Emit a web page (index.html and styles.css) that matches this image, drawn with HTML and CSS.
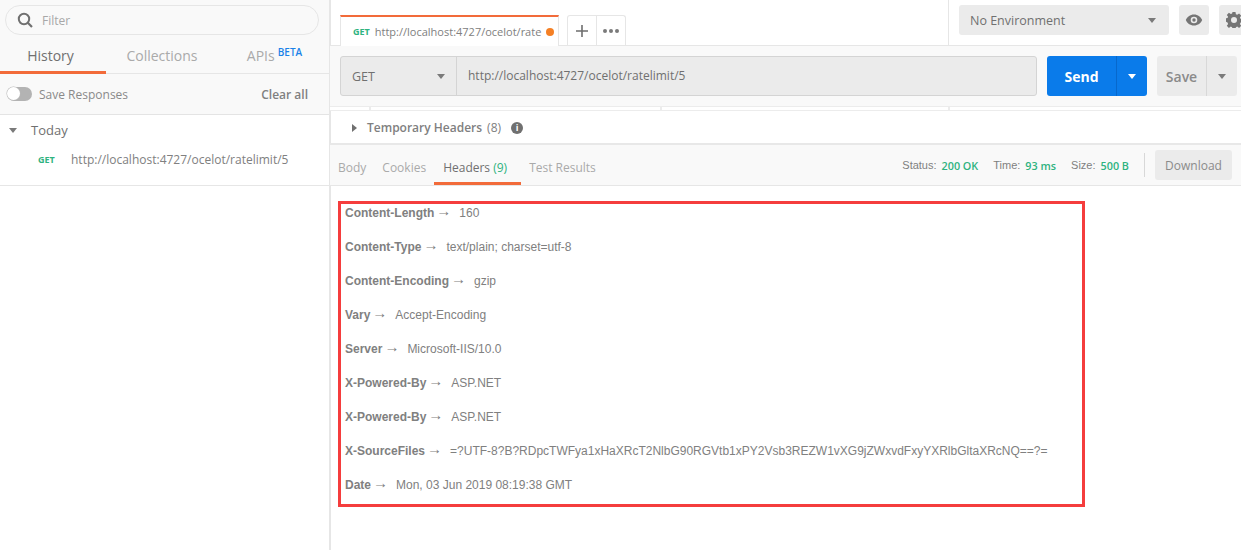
FILE: index.html
```html
<!DOCTYPE html>
<html lang="en">
<head>
<meta charset="utf-8">
<title>Postman</title>
<link rel="stylesheet" href="styles.css">
</head>
<body>
<div class="app">
  <aside class="sidebar">
    <div class="side-top">
      <div class="filter">
        <svg class="search" width="16" height="16" viewBox="0 0 16 16"><circle cx="7" cy="7" r="5.2" fill="none" stroke="#707070" stroke-width="2"/><path d="M10.8 10.8 15 15" stroke="#707070" stroke-width="2.2"/></svg>
        <span>Filter</span>
      </div>
      <div class="side-tabs">
        <div class="side-tab active">History</div>
        <div class="side-tab">Collections</div>
        <div class="side-tab apis">APIs<sup>BETA</sup></div>
      </div>
      <div class="save-row">
        <span class="toggle"><i></i></span>
        <span class="save-label">Save Responses</span>
        <span class="clear">Clear all</span>
      </div>
    </div>
    <div class="history">
      <div class="today"><i class="caret"></i><span>Today</span></div>
      <div class="hist-item"><b>GET</b><span>http://localhost:4727/ocelot/ratelimit/5</span></div>
    </div>
  </aside>
  <main class="main">
    <header class="topbar">
      <div class="tabs-area">
        <div class="req-tab"><b>GET</b><span>http://localhost:4727/ocelot/rate</span><i class="dot"></i></div>
        <div class="tab-actions">
          <div class="plus"><svg width="14" height="14" viewBox="0 0 14 14"><path d="M7 1v12M1 7h12" stroke="#6e6e6e" stroke-width="1.6"/></svg></div>
          <div class="more"><i></i><i></i><i></i></div>
        </div>
      </div>
      <div class="env-area">
        <div class="env"><span>No Environment</span><i class="caret"></i></div>
        <div class="icon-btn"><svg width="18" height="12" viewBox="0 0 18 12"><path fill-rule="evenodd" fill="#757575" d="M9 .5C5 .5 2 3 .8 6 2 9 5 11.500 9 11.500S16 9 17.200 6C16 3 13 .5 9 .5Zm0 2.200a3.300 3.300 0 1 1 0 6.600 3.300 3.300 0 0 1 0-6.600Z"/><circle cx="9" cy="6" r="1.700" fill="#757575"/></svg></div>
        <div class="icon-btn gear-btn"><svg width="16" height="16" viewBox="0 0 16 16"><path fill-rule="evenodd" fill="#757575" d="M6.500 0h3l.4 2.200 1.300.6 1.900-1.300 2.100 2.100-1.300 1.900.6 1.300 2.200.4v3l-2.200.4-.6 1.300 1.300 1.900-2.100 2.100-1.900-1.300-1.300.6-.4 2.200h-3l-.4-2.200-1.300-.6-1.900 1.300-2.100-2.100 1.300-1.900-.6-1.300L-.7 9.500v-3l2.200-.4.6-1.300-1.300-1.900 2.100-2.100 1.900 1.300 1.300-.6L6.500 0ZM8 5a3 3 0 1 0 0 6 3 3 0 0 0 0-6Z"/></svg></div>
      </div>
    </header>
    <section class="url-row">
      <div class="url-group">
        <div class="method"><span>GET</span><i class="caret"></i></div>
        <div class="url">http://localhost:4727/ocelot/ratelimit/5</div>
      </div>
      <div class="send"><span>Send</span><div class="split"><i class="caret"></i></div></div>
      <div class="save"><span>Save</span><div class="split"><i class="caret"></i></div></div>
    </section>
    <div class="strip"><i></i><i></i><i></i><i></i></div>
    <div class="temp">
      <i class="caret-right"></i>
      <span class="temp-label">Temporary Headers</span>
      <span class="temp-count">(8)</span>
      <span class="info">i</span>
    </div>
    <nav class="res-bar">
      <div class="res-tab">Body</div>
      <div class="res-tab">Cookies</div>
      <div class="res-tab active">Headers <em>(9)</em></div>
      <div class="res-tab">Test Results</div>
      <div class="meta">
        <span>Status:</span><strong>200 OK</strong>
        <span class="gap">Time:</span><strong>93 ms</strong>
        <span class="gap">Size:</span><strong>500 B</strong>
      </div>
      <div class="download">Download</div>
    </nav>
    <section class="headers">
      <div class="hdr"><b>Content-Length</b><u>→</u><span>160</span></div>
      <div class="hdr"><b>Content-Type</b><u>→</u><span>text/plain; charset=utf-8</span></div>
      <div class="hdr"><b>Content-Encoding</b><u>→</u><span>gzip</span></div>
      <div class="hdr"><b>Vary</b><u>→</u><span>Accept-Encoding</span></div>
      <div class="hdr"><b>Server</b><u>→</u><span>Microsoft-IIS/10.0</span></div>
      <div class="hdr"><b>X-Powered-By</b><u>→</u><span>ASP.NET</span></div>
      <div class="hdr"><b>X-Powered-By</b><u>→</u><span>ASP.NET</span></div>
      <div class="hdr"><b>X-SourceFiles</b><u>→</u><span>=?UTF-8?B?RDpcTWFya1xHaXRcT2NlbG90RGVtb1xPY2Vsb3REZW1vXG9jZWxvdFxyYXRlbGltaXRcNQ==?=</span></div>
      <div class="hdr"><b>Date</b><u>→</u><span>Mon, 03 Jun 2019 08:19:38 GMT</span></div>
    </section>
  </main>
</div>
</body>
</html>
```
FILE: styles.css
```css
* { box-sizing: border-box; }
html, body { margin: 0; height: 100%; overflow: hidden; background: #fff; }
body { font-family: "Open Sans", sans-serif; color: #808080; }
.app { display: flex; width: 1241px; height: 550px; overflow: hidden; }
i, em, u { font-style: normal; text-decoration: none; }

.caret { display: block; width: 0; height: 0; border-left: 4.500px solid transparent; border-right: 4.500px solid transparent; border-top: 5px solid #7a7a7a; }

/* sidebar */
.sidebar { width: 331px; flex: none; border-right: 2px solid #e6e6e6; display: flex; flex-direction: column; }
.side-top { background: #f9f9f9; border-bottom: 1px solid #e4e4e4; height: 115px; padding-top: 5px; }
.filter { margin-left: 5px; width: 314px; height: 30px; border: 1px solid #e6e6e6; border-radius: 15px; display: flex; align-items: center; padding-left: 11px; gap: 9px; font-size: 12px; color: #a8a8a8; }
.side-tabs { display: flex; height: 39px; border-bottom: 1px solid #e6e6e6; }
.side-tab { width: 106px; flex: none; font-size: 14px; line-height: 41px; text-align: center; color: #aaa; border-bottom: 3px solid transparent; height: 39px; }
.side-tab.active { color: #707070; border-bottom-color: #f26b3a; padding-right: 5px; }
.side-tab:nth-child(2) { width: 112px; }
.side-tab.apis { width: 110px; padding-left: 3px; }
.side-tab sup { color: #1a82e8; font-size: 10px; font-weight: 600; line-height: 0; margin-left: 3px; vertical-align: 5px; }
.save-row { display: flex; align-items: center; height: 40px; padding: 0 21px 0 7px; font-size: 12px; }
.toggle { width: 25px; height: 14px; border-radius: 7px; background: #b3b3b3; flex: none; }
.toggle i { display: block; width: 13px; height: 13px; border-radius: 50%; background: #fff; box-shadow: 0 0 0 .5px #bbb; }
.save-label { margin-left: 7px; color: #8a8a8a; }
.clear { margin-left: auto; font-weight: 600; color: #808080; }
.history { height: 71px; border-bottom: 1px solid #e6e6e6; }
.today { display: flex; align-items: center; height: 29px; font-size: 13px; color: #707070; padding: 1px 0 0 9px; }
.today .caret { margin-right: 14px; }
.hist-item { display: flex; align-items: center; height: 30px; font-size: 12px; color: #808080; padding: 0 0 0 38px; }
.hist-item b { font-size: 9px; font-weight: 700; color: #2fb380; width: 33px; flex: none; }

/* main */
.main { flex: 1; min-width: 0; display: flex; flex-direction: column; margin-left: -1px; }
.topbar { height: 46px; border-bottom: 1px solid #e6e6e6; display: flex; flex: none; }
.tabs-area { width: 619px; flex: none; display: flex; align-items: flex-end; padding-left: 10px; border-right: 1px solid #e6e6e6; }
.req-tab { width: 219px; height: 31px; border-top: 2px solid #f26b3a; border-left: 1px solid #e6e6e6; border-right: 1px solid #e6e6e6; background: #fff; display: flex; align-items: center; padding: 0 0 0 12px; margin-bottom: -1px; font-size: 11px; color: #808080; }
.req-tab b { font-size: 9px; font-weight: 700; color: #2fb380; margin-right: 5px; }
.dot { width: 8px; height: 8px; border-radius: 50%; background: #f58025; margin-left: 5px; flex: none; }
.tab-actions { display: flex; height: 30px; margin-left: 8px; border: 1px solid #e6e6e6; border-bottom: 0; border-radius: 3px 3px 0 0; }
.plus { width: 29px; border-right: 1px solid #e6e6e6; display: flex; align-items: center; justify-content: center; }
.more { width: 28px; display: flex; align-items: center; justify-content: center; gap: 2px; }
.more i { width: 4px; height: 4px; border-radius: 50%; background: #7a7a7a; }
.env-area { flex: 1; display: flex; padding: 5px 0 0 10px; gap: 10px; }
.env { width: 210px; height: 30px; background: #ebebeb; border-radius: 3px; display: flex; align-items: center; justify-content: space-between; padding: 0 13px 0 11px; font-size: 12.500px; color: #707070; }
.icon-btn { width: 30px; height: 30px; flex: none; background: #ebebeb; border-radius: 3px; display: flex; align-items: center; justify-content: center; }

.url-row { height: 60px; flex: none; background: #f9f9f9; display: flex; align-items: center; padding: 0 4px 0 10px; }
.url-group { display: flex; width: 697px; height: 40px; background: #ebebeb; border: 1px solid #d4d4d4; border-radius: 3px; flex: none; }
.method { width: 116px; flex: none; border-right: 1px solid #d4d4d4; display: flex; align-items: center; justify-content: space-between; padding: 0 11px; font-size: 12.500px; color: #707070; }
.url { flex: 1; padding-left: 11px; line-height: 38px; font-size: 12px; color: #707070; }
.send, .save { display: flex; height: 40px; border-radius: 3px; margin-left: 10px; flex: none; }
.send { width: 100px; background: #0a7bea; color: #fff; font-size: 14px; font-weight: 700; }
.send span { width: 69px; text-align: center; line-height: 41px; }
.split { flex: 1; display: flex; align-items: center; justify-content: center; border-left: 1px solid #0768cc; }
.send .caret { border-top-color: #fff; }
.save { width: 80px; background: #ebebeb; color: #8a8a8a; font-size: 14px; font-weight: 600; }
.save span { width: 49px; text-align: center; line-height: 41px; }
.save .split { border-left-color: #d8d8d8; }

.strip { height: 5px; flex: none; display: grid; grid-template-columns: 39px 289px 286px 1fr; gap: 2px; background: #ececec; padding: 1px 0; }
.strip i { background: #fff; }
.temp { height: 34px; flex: none; display: flex; align-items: center; padding: 1px 0 0 22px; font-size: 12px; border-bottom: 2px solid #e8e8e8; }
.caret-right { width: 0; height: 0; border-top: 4px solid transparent; border-bottom: 4px solid transparent; border-left: 5px solid #707070; margin-right: 10px; }
.temp-label { font-weight: 600; color: #808080; }
.temp-count { margin-left: 5px; color: #808080; }
.info { margin-left: 10px; width: 12px; height: 12px; border-radius: 50%; background: #707070; color: #fff; font-size: 9px; font-weight: 700; line-height: 12px; text-align: center; }

.res-bar { height: 41px; flex: none; background: #f9f9f9; border-bottom: 1px solid #e6e6e6; display: flex; font-size: 12px; color: #aaa; padding-left: 8px; }
.res-tab { height: 40px; line-height: 45px; padding: 0 9px 0 0; margin-right: 7px; }
.res-tab.active { color: #707070; border-bottom: 3px solid #f26b3a; padding: 0 9px; margin: 0 8px 0 -8px; width: 87px; white-space: nowrap; }
.res-tab em { color: #2fb380; }
.meta { margin-left: auto; font-family: "Liberation Sans", sans-serif; font-size: 11px; line-height: 41px; white-space: nowrap; display: flex; gap: 5px; padding-right: 26px; color: #808080; }
.meta strong { color: #2fb380; font-family: "Open Sans", sans-serif; font-size: 10.800px; font-weight: 600; }
.meta .gap { margin-left: 10px; }
.download { position: relative; width: 77px; height: 30px; margin: 5px 9px 0 0; background: #ebebeb; border-radius: 3px; text-align: center; line-height: 31px; font-size: 12px; color: #8a8a8a; }
.download::before { content: ""; position: absolute; left: -11px; top: 3px; height: 24px; border-left: 1px solid #d8d8d8; }

.headers { margin: 15px 0 0 8px; width: 747px; height: 306px; border: 3px solid #f53d3d; padding: 1px 0 0 4px; font-family: "Liberation Sans", sans-serif; font-size: 12px; color: #808080; }
.hdr { height: 34px; line-height: 17px; white-space: nowrap; }
.hdr b { font-weight: 700; }
.hdr u { display: inline-block; width: 12px; margin: 0 11px 0 2px; font-size: 15px; line-height: 0; vertical-align: 1px; }
```
